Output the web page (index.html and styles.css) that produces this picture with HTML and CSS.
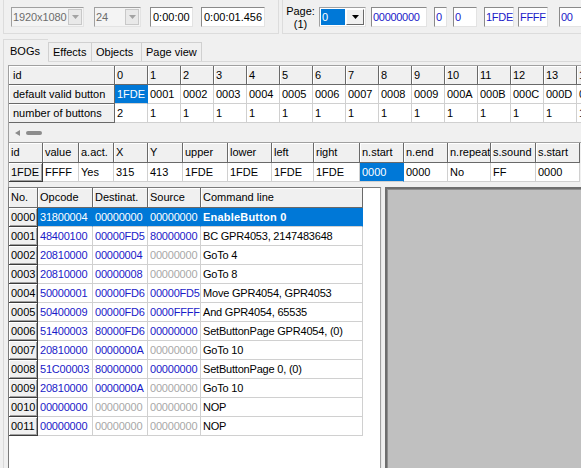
FILE: index.html
```html
<!DOCTYPE html>
<html>
<head>
<meta charset="utf-8">
<title>BOGs</title>
<link rel="stylesheet" href="styles.css">
</head>
<body>
<div class="toolbar">
  <div class="group g1">
    <div class="combo dis w-res"><span class="ctext">1920x1080</span><span class="cbtn"><svg width="7" height="4" viewBox="0 0 7 4"><path d="M0 0h7L3.5 4z" fill="#a3a3a3"/></svg></span></div>
    <div class="combo dis w-fps"><span class="ctext">24</span><span class="cbtn"><svg width="7" height="4" viewBox="0 0 7 4"><path d="M0 0h7L3.5 4z" fill="#a3a3a3"/></svg></span></div>
    <div class="edit w-t1">0:00:00</div>
    <div class="edit w-t2">0:00:01.456</div>
  </div>
  <div class="group g2">
    <div class="pagelbl">Page:<br>(1)</div>
    <div class="combo pg w-pg"><span class="ctext"><span class="csel">0</span></span><span class="cbtn raised"><svg width="7" height="4" viewBox="0 0 7 4"><path d="M0 0h7L3.5 4z" fill="#000"/></svg></span></div>
    <div class="edit blue w-e1">00000000</div>
    <div class="edit blue w-e2">0</div>
    <div class="edit blue w-e3">0</div>
    <div class="edit blue w-e4">1FDE</div>
    <div class="edit blue w-e5">FFFF</div>
    <div class="edit blue w-e6">00</div>
  </div>
</div>

<div class="tabs">
  <div class="tab sel">BOGs</div>
  <div class="tab t-eff">Effects</div>
  <div class="tab t-obj">Objects</div>
  <div class="tab t-pv last">Page view</div>
</div>

<div class="page">
  <div class="bgrid">
    <div class="grid g-bog">
      <div class="c fx lbl">id</div>
      <div class="c fx">0</div><div class="c fx">1</div><div class="c fx">2</div><div class="c fx">3</div><div class="c fx">4</div><div class="c fx">5</div><div class="c fx">6</div><div class="c fx">7</div><div class="c fx">8</div><div class="c fx">9</div><div class="c fx">10</div><div class="c fx">11</div><div class="c fx">12</div><div class="c fx">13</div><div class="c fx">14</div>
      <div class="c fx lbl">default valid button</div>
      <div class="c sel">1FDE</div><div class="c">0001</div><div class="c">0002</div><div class="c">0003</div><div class="c">0004</div><div class="c">0005</div><div class="c">0006</div><div class="c">0007</div><div class="c">0008</div><div class="c">0009</div><div class="c">000A</div><div class="c">000B</div><div class="c">000C</div><div class="c">000D</div><div class="c">000E</div>
      <div class="c fx lbl">number of buttons</div>
      <div class="c">2</div><div class="c">1</div><div class="c">1</div><div class="c">1</div><div class="c">1</div><div class="c">1</div><div class="c">1</div><div class="c">1</div><div class="c">1</div><div class="c">1</div><div class="c">1</div><div class="c">1</div><div class="c">1</div><div class="c">1</div><div class="c">1</div>
    </div>
    <div class="hscroll"><span class="sarrow"></span><span class="sthumb"></span></div>
  </div>

  <div class="bgrid2">
    <div class="grid g-btn">
      <div class="c fx">id</div><div class="c fx">value</div><div class="c fx">a.act.</div><div class="c fx">X</div><div class="c fx">Y</div><div class="c fx">upper</div><div class="c fx">lower</div><div class="c fx">left</div><div class="c fx">right</div><div class="c fx">n.start</div><div class="c fx">n.end</div><div class="c fx">n.repeat</div><div class="c fx">s.sound</div><div class="c fx">s.start</div>
      <div class="c fx btn">1FDE</div><div class="c">FFFF</div><div class="c">Yes</div><div class="c">315</div><div class="c">413</div><div class="c">1FDE</div><div class="c">1FDE</div><div class="c">1FDE</div><div class="c">1FDE</div><div class="c sel">0000</div><div class="c">0000</div><div class="c">No</div><div class="c">FF</div><div class="c">0000</div>
    </div>
  </div>

  <div class="bottom">
    <div class="cmd">
      <div class="grid g-cmd">
        <div class="c fx hd">No.</div><div class="c fx hd">Opcode</div><div class="c fx hd">Destinat.</div><div class="c fx hd">Source</div><div class="c fx hd">Command line</div>

        <div class="c fx btn">0000</div><div class="c sel">31800004</div><div class="c sel">00000000</div><div class="c sel">00000000</div><div class="c sel bold">EnableButton 0</div>
        <div class="c fx btn">0001</div><div class="c b">48400100</div><div class="c b">00000FD5</div><div class="c b">80000000</div><div class="c">BC GPR4053, 2147483648</div>
        <div class="c fx btn">0002</div><div class="c b">20810000</div><div class="c b">00000004</div><div class="c g">00000000</div><div class="c">GoTo 4</div>
        <div class="c fx btn">0003</div><div class="c b">20810000</div><div class="c b">00000008</div><div class="c g">00000000</div><div class="c">GoTo 8</div>
        <div class="c fx btn">0004</div><div class="c b">50000001</div><div class="c b">00000FD6</div><div class="c b">00000FD5</div><div class="c">Move GPR4054, GPR4053</div>
        <div class="c fx btn">0005</div><div class="c b">50400009</div><div class="c b">00000FD6</div><div class="c b">0000FFFF</div><div class="c">And GPR4054, 65535</div>
        <div class="c fx btn">0006</div><div class="c b">51400003</div><div class="c b">80000FD6</div><div class="c b">00000000</div><div class="c">SetButtonPage GPR4054, (0)</div>
        <div class="c fx btn">0007</div><div class="c b">20810000</div><div class="c b">0000000A</div><div class="c g">00000000</div><div class="c">GoTo 10</div>
        <div class="c fx btn">0008</div><div class="c b">51C00003</div><div class="c b">80000000</div><div class="c b">00000000</div><div class="c">SetButtonPage 0, (0)</div>
        <div class="c fx btn">0009</div><div class="c b">20810000</div><div class="c b">0000000A</div><div class="c g">00000000</div><div class="c">GoTo 10</div>
        <div class="c fx btn">0010</div><div class="c b">00000000</div><div class="c g">00000000</div><div class="c g">00000000</div><div class="c">NOP</div>
        <div class="c fx btn">0011</div><div class="c b">00000000</div><div class="c g">00000000</div><div class="c g">00000000</div><div class="c">NOP</div>
      </div>
    </div>
    <div class="splitter"></div>
    <div class="canvas"></div>
  </div>
</div>
</body>
</html>
```

FILE: styles.css
```css
* { box-sizing: border-box; }
html, body { margin: 0; padding: 0; }
body {
  width: 581px;
  height: 468px;
  overflow: hidden;
  background: #f0f0f0;
  font-family: "Liberation Sans", Arial, sans-serif;
  font-size: 11px;
  color: #000;
}

/* ---------- toolbar ---------- */
.toolbar { display: flex; height: 34px; }
.group {
  height: 34px;
  display: flex;
  align-items: flex-start;
  border-left: 1px solid #dcdcdc;
  border-bottom: 1px solid #dcdcdc;
  padding-top: 7px;
  flex: none;
}
.g1 { margin-left: 3px; width: 276px; border-right: 1px solid #dcdcdc; padding-left: 7px; }
.g2 { margin-left: 3px; flex: 1; padding-left: 2px; white-space: nowrap; }

.combo {
  height: 20px;
  display: flex;
  border: 1px solid;
  border-color: #a0a0a0 #e3e3e3 #e3e3e3 #a0a0a0;
  flex: none;
}
.combo .ctext { flex: 1; line-height: 18px; padding-left: 1px; overflow: hidden; white-space: nowrap; }
.combo .cbtn {
  width: 14px;
  flex: none;
  display: flex;
  align-items: center;
  justify-content: center;
  background: #e9e9e9;
  border: 1px solid #c8c8c8;
  margin: 1px 1px 1px 0;
}
.combo.dis { background: #f4f4f4; color: #6d6d6d; }
.combo.dis .ctext { letter-spacing: -0.1px; }
.combo.pg { background: #fff; }
.combo.pg .ctext { padding: 1px; }
.csel { display: block; background: #0078d7; color: #fff; height: 16px; line-height: 16px; padding-left: 1px; width: 24px; }
.cbtn.raised { background: #f0f0f0; border-color: #fff #696969 #696969 #fff; width: 18px; }

.w-res { width: 73px; margin-right: 10px; }
.w-fps { width: 47px; margin-right: 9px; }
.w-pg { width: 47px; margin-right: 5px; }

.edit {
  height: 20px;
  background: #fff;
  border: 1px solid;
  border-color: #8a8a8a #e3e3e3 #e3e3e3 #8a8a8a;
  line-height: 18px;
  padding-left: 2px;
  white-space: nowrap;
  overflow: hidden;
  flex: none;
}
.edit.blue { color: #1a1ac8; padding-left: 1px; letter-spacing: -0.3px; }
.w-t1 { width: 43px; margin-right: 8px; }
.w-t2 { width: 64px; }
.w-e1 { width: 56px; margin-right: 7px; }
.w-e2 { width: 13px; margin-right: 6px; }
.w-e3 { width: 24px; margin-right: 7px; }
.w-e4 { width: 30px; margin-right: 4px; }
.w-e5 { width: 30px; margin-right: 11px; }
.w-e6 { width: 32px; }

.pagelbl {
  line-height: 13px;
  margin-top: -2px;
  margin-right: 3px;
  text-align: center;
  width: 31px;
  flex: none;
}

/* ---------- tabs ---------- */
.tabs {
  display: flex;
  align-items: flex-end;
  height: 22px;
  margin: 5px 0 0 3px;
  position: relative;
  z-index: 1;
}
.tab {
  height: 19px;
  border: 1px solid #d0d0d0;
  border-bottom: none;
  border-right: none;
  padding: 3px 0 0 4px;
  background: #f0f0f0;
}
.tab.sel { height: 23px; margin-bottom: -1px; width: 45px; padding: 5px 0 0 6px; border-color: #dadada; }
.tab.t-eff { width: 43px; }
.tab.t-obj { width: 50px; }
.tab.t-pv { width: 61px; border-right: 1px solid #d0d0d0; }

/* ---------- tab page ---------- */
.page {
  margin-left: 3px;
  border-top: 1px solid #d9d9d9;
  border-left: 1px solid #d9d9d9;
  padding: 3px 0 0 4px;
  height: 407px;
}

.grid { display: grid; }
.c {
  height: 19px;
  line-height: 18px;
  border-right: 1px solid #d0d0d0;
  border-bottom: 1px solid #d0d0d0;
  padding-left: 2px;
  white-space: nowrap;
  overflow: hidden;
  background: #fff;
}
.c.fx {
  background: #f0f0f0;
  border-right-color: #696969;
  border-bottom-color: #696969;
  box-shadow: inset 1px 1px 0 #fff;
}
.c.lbl { padding-left: 4px; }
.c.sel { background: #0078d7; color: #fff; border-right-color: #0078d7; }
.c.btn { box-shadow: inset 1px 1px 0 #fff, inset -1px -1px 0 #a0a0a0; border-color: #3c3c3c; }
.c.b { color: #1a1ac8; }
.c.g { color: #a8a8a8; }
.c.bold { font-weight: bold; letter-spacing: 0.2px; }

.bgrid {
  border-left: 1px solid #a0a0a0;
  border-top: 1px solid #a0a0a0;
  height: 77px;
}
.g-bog { grid-template-columns: 106px repeat(15, 33px); }
.hscroll { height: 19px; display: flex; align-items: center; padding-left: 6px; }
.sarrow {
  width: 0; height: 0;
  border-top: 3px solid transparent;
  border-bottom: 3px solid transparent;
  border-right: 5px solid #8c8c8c;
  margin-right: 6px;
}
.sthumb { width: 16px; height: 4px; border-radius: 2px; background: #8c8c8c; }

.bgrid2 {
  border-left: 1px solid #a0a0a0;
  border-top: 1px solid #a0a0a0;
  height: 45px;
}
.g-btn { grid-template-columns: 34px 36px 35px 34px 35px 45px 44px 42px 46px 44px 44px 43px 45px 44px; }
.g-btn > .c:nth-child(-n+14) { height: 20px; line-height: 19px; }

/* ---------- bottom split ---------- */
.bottom { display: flex; height: 281px; }
.cmd {
  width: 373px;
  flex: none;
  background: #fff;
  border-left: 1px solid #7a7a7a;
  border-top: 1px solid #7a7a7a;
  border-right: 1px solid #a0a0a0;
}
.g-cmd { grid-template-columns: 29px 55px 55px 53px 162px; }
.g-cmd > .c:not(.fx) { letter-spacing: -0.2px; }
.g-cmd > .c.bold { letter-spacing: 0.2px; }
.c.hd { height: 20px; line-height: 19px; }
.splitter { width: 4px; flex: none; border-left: 1px solid #e8e8e8; }
.canvas {
  flex: 1;
  background: #c0c0c0;
  border-left: 2px solid;
  border-top: 2px solid;
  border-color: #6e6e6e;
  box-shadow: inset 1px 1px 0 #8e8e8e;
}
```
